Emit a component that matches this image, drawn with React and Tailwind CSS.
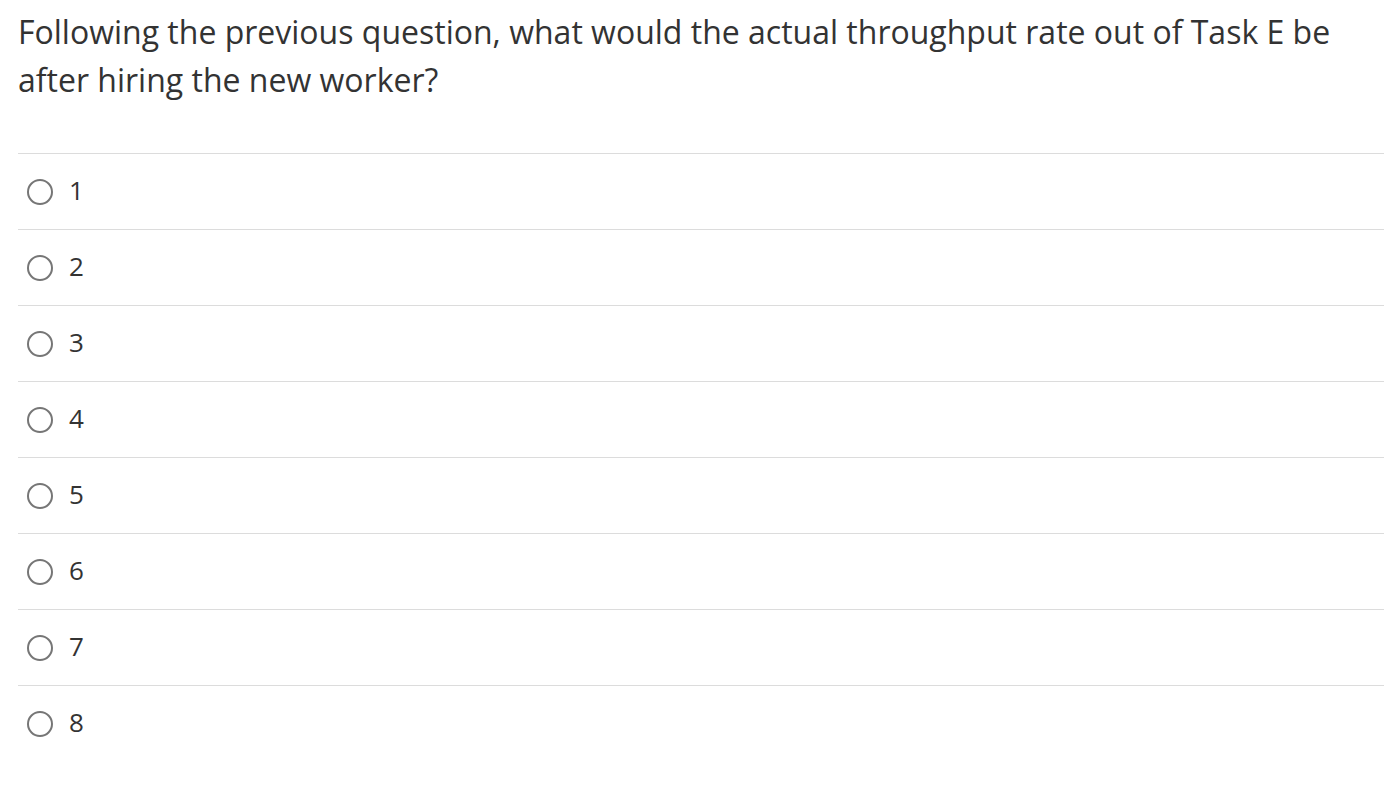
const options = ["1", "2", "3", "4", "5", "6", "7", "8"];

export default function App() {
  return (
    <div className="min-h-screen bg-white pl-[18px] pt-2 text-[#333] font-['Open_Sans',sans-serif]">
      <h1 className="text-[32px] leading-[48px] font-normal">
        Following the previous question, what would the actual throughput rate out of Task E be after
        hiring the new worker?
      </h1>
      <div className="mt-[49px]">
        {options.map((opt) => (
          <label
            key={opt}
            className="flex items-center h-[76px] border-t border-[#dcdcdc] cursor-pointer"
          >
            <span className="ml-[9px] w-[26px] h-[26px] rounded-full border-2 border-[#767676] shrink-0" />
            <span className="ml-[16px] mb-[4px] text-[26px] leading-none">{opt}</span>
          </label>
        ))}
      </div>
    </div>
  );
}
